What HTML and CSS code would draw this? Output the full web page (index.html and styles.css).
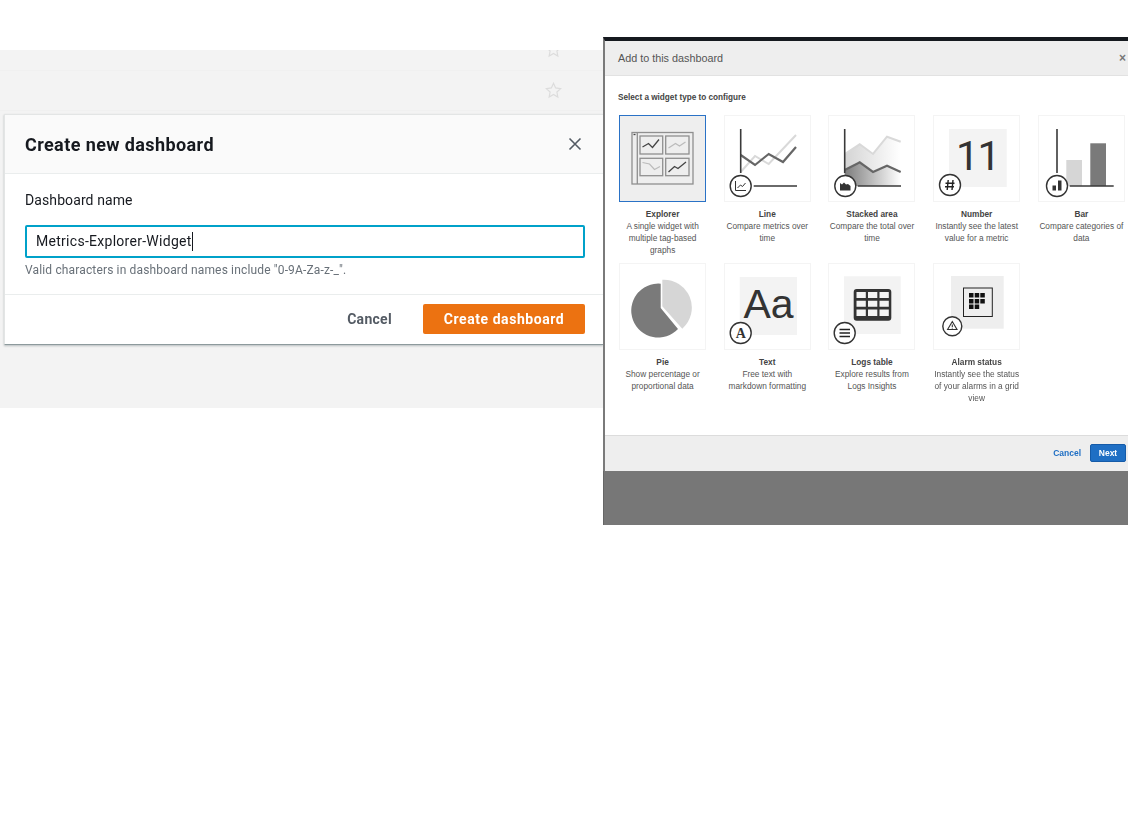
FILE: index.html
```html
<!DOCTYPE html>
<html lang="en">
<head>
<meta charset="utf-8">
<title>Create new dashboard</title>
<link rel="stylesheet" href="styles.css">
</head>
<body>
<main class="collage">
  <section class="shot-left">
    <div class="bg-row bg-row-clip">
      <svg class="star star-clip" viewBox="0 0 16 16"><path d="M8 1.2l2 4.4 4.7.6-3.5 3.2.9 4.8L8 11.8l-4.1 2.4.9-4.8L1.3 6.2 6 5.6z"/></svg>
    </div>
    <div class="bg-row">
      <svg class="star" viewBox="0 0 16 16"><path d="M8 1.2l2 4.4 4.7.6-3.5 3.2.9 4.8L8 11.8l-4.1 2.4.9-4.8L1.3 6.2 6 5.6z"/></svg>
    </div>
    <div class="dialog">
      <header class="dialog-head">
        <h2 class="dialog-title">Create new dashboard</h2>
        <svg class="dialog-close" viewBox="0 0 14 14"><path d="M1.5 1.5l11 11M12.5 1.5l-11 11"/></svg>
      </header>
      <div class="dialog-body">
        <div class="field-label">Dashboard name</div>
        <div class="field-input"><span class="field-value">Metrics-Explorer-Widget</span></div>
        <div class="field-hint">Valid characters in dashboard names include "0-9A-Za-z-_".</div>
      </div>
      <footer class="dialog-foot">
        <span class="btn-link">Cancel</span>
        <span class="btn-primary">Create dashboard</span>
      </footer>
    </div>
  </section>

  <section class="shot-right">
    <div class="modal">
      <header class="modal-head">
        <span class="modal-title">Add to this dashboard</span>
        <span class="modal-close">×</span>
      </header>
      <div class="modal-body">
        <div class="modal-sub">Select a widget type to configure</div>
        <div class="widget-grid">

          <div class="widget">
            <div class="tile tile-selected">
              <svg viewBox="0 0 87 87">
                <rect class="s-mid" x="13" y="17.5" width="61" height="51.5"/>
                <path class="s-mid" d="M18.3 17.5V69"/>
                <path class="s-dark" d="M14.5 19.5h2"/>
                <rect class="s-mid" x="21" y="21" width="22.7" height="18"/>
                <rect class="s-mid" x="46.7" y="21" width="23.3" height="18"/>
                <rect class="s-mid" x="21" y="43.3" width="22.7" height="17.4"/>
                <rect class="s-mid" x="46.7" y="43.3" width="23.3" height="17.4"/>
                <path class="s-dark" d="M23.5 32l6-3.5 4 4 6.5-8"/>
                <path class="s-light" d="M49.5 33l7-4.5 4 2.5 6-4"/>
                <path class="s-light" d="M23.5 47.5l7 1.5 5 5.5 5.5-3"/>
                <path class="s-dark" d="M49.5 57l6-5.5 3.500 2 8-6.500"/>
              </svg>
            </div>
            <div class="widget-name">Explorer</div>
            <div class="widget-desc">A single widget with multiple tag-based graphs</div>
          </div>

          <div class="widget">
            <div class="tile">
              <svg viewBox="0 0 87 87">
                <path class="l-light" d="M16.700 57L31 41l13.700 8L72 20"/>
                <path class="l-mid" d="M16.700 40L31 50l13.700-11L59 47l13-15"/>
                <path class="l-axis" d="M16.700 14v44M29.700 71H73"/>
                <circle class="badge" cx="16.700" cy="71" r="10.500"/>
                <path class="glyph" d="M11.500 66v9.500H22"/>
                <path class="glyph" d="M13.500 73l3-3 2 1.500 3-3.500"/>
              </svg>
            </div>
            <div class="widget-name">Line</div>
            <div class="widget-desc">Compare metrics over time</div>
          </div>

          <div class="widget">
            <div class="tile">
              <svg viewBox="0 0 87 87">
                <defs>
                  <linearGradient id="stack-light"><stop offset="0" stop-color="#d4d4d4"/><stop offset="1" stop-color="#fff"/></linearGradient>
                  <linearGradient id="stack-dark"><stop offset="0" stop-color="#7d7d7d"/><stop offset="1" stop-color="#fff"/></linearGradient>
                </defs>
                <path fill="url(#stack-light)" d="M16.700 39l15-9.700L45 39l14-17.300 13.700 5V71H16.700z"/>
                <path fill="url(#stack-dark)" d="M16.700 55l15-7.700L45 57l14-6.300L72.700 57V71H16.700z"/>
                <path class="l-light" d="M16.700 39l15-9.700L45 39l14-17.300 13.700 5"/>
                <path class="l-mid" d="M16.700 55l15-7.700L45 57l14-6.300L72.700 57"/>
                <path class="l-axis" d="M16.700 14v44M29.700 71H73"/>
                <circle class="badge" cx="17.300" cy="71" r="10.500"/>
                <path class="glyph-fill" d="M12 75.500V68l2 1.500 2-2 2 2 2-.5 2.500 2v4.500z"/>
              </svg>
            </div>
            <div class="widget-name">Stacked area</div>
            <div class="widget-desc">Compare the total over time</div>
          </div>

          <div class="widget">
            <div class="tile">
              <svg viewBox="0 0 87 87">
                <rect class="panel" x="16" y="14" width="57.700" height="58"/>
                <text class="tile-num" x="44.500" y="55">11</text>
                <circle class="badge" cx="17" cy="70" r="10.500"/>
                <path class="glyph-hash" d="M15.200 65l-1 10M20 65l-1 10M12.500 68.300h9M12 71.800h9"/>
              </svg>
            </div>
            <div class="widget-name">Number</div>
            <div class="widget-desc">Instantly see the latest value for a metric</div>
          </div>

          <div class="widget">
            <div class="tile">
              <svg viewBox="0 0 87 87">
                <rect x="28.300" y="45" width="15.700" height="26" fill="#d6d6d6"/>
                <rect x="52.300" y="28.300" width="15.700" height="42.700" fill="#7a7a7a"/>
                <path class="l-axis" d="M19 14v44M31.700 71h44"/>
                <circle class="badge" cx="19" cy="71" r="10.500"/>
                <rect class="glyph-fill" x="14.500" y="70.500" width="3.500" height="5"/>
                <rect class="glyph-fill" x="20" y="65.500" width="3.500" height="10"/>
              </svg>
            </div>
            <div class="widget-name">Bar</div>
            <div class="widget-desc">Compare categories of data</div>
          </div>

          <div class="widget">
            <div class="tile">
              <svg viewBox="0 0 87 87">
                <path fill="#7a7a7a" d="M41.700 45V20.700A27 27 0 1 0 59 66z"/>
                <path fill="#d6d6d6" d="M43.300 43.300V16.700A28 28 0 0 1 63.300 65.700z"/>
              </svg>
            </div>
            <div class="widget-name">Pie</div>
            <div class="widget-desc">Show percentage or proportional data</div>
          </div>

          <div class="widget">
            <div class="tile">
              <svg viewBox="0 0 87 87">
                <rect class="panel" x="15.700" y="14" width="57.300" height="58"/>
                <text class="tile-big" x="44.500" y="55">Aa</text>
                <circle class="badge" cx="16.700" cy="70" r="10.500"/>
                <text class="glyph-a" x="16.700" y="75">A</text>
              </svg>
            </div>
            <div class="widget-name">Text</div>
            <div class="widget-desc">Free text with markdown formatting</div>
          </div>

          <div class="widget">
            <div class="tile">
              <svg viewBox="0 0 87 87">
                <rect class="panel" x="16" y="13.300" width="56.700" height="57.700"/>
                <rect x="25.700" y="26" width="37.600" height="31.700" rx="3" fill="#333"/>
                <path class="table-cells" d="M28.500 29h9.300v6h-9.300zM40 29h9.300v6H40zM51.500 29h9.300v6h-9.300zM28.500 37.800h9.300v6h-9.300zM40 37.800h9.300v6H40zM51.500 37.800h9.300v6h-9.300zM28.500 46.600h9.300v6.500h-9.300zM40 46.600h9.300v6.500H40zM51.500 46.600h9.300v6.500h-9.300z"/>
                <circle class="badge" cx="16.700" cy="70" r="10.500"/>
                <path class="glyph-lines" d="M11.500 66.500h10.500M11.500 70h10.500M11.500 73.500h10.500"/>
              </svg>
            </div>
            <div class="widget-name">Logs table</div>
            <div class="widget-desc">Explore results from Logs Insights</div>
          </div>

          <div class="widget">
            <div class="tile">
              <svg viewBox="0 0 87 87">
                <rect class="panel panel-alarm" x="18" y="13" width="52.700" height="52.700"/>
                <rect x="30.500" y="25" width="28.800" height="28.500" fill="none" stroke="#222" stroke-width="1"/>
                <path class="glyph-fill-black" d="M36 30h4.500v4.500H36zM41.700 30h4.500v4.500h-4.500zM47.300 30h4.500v4.500h-4.500zM36 36h4.500v4.500H36zM41.700 36h4.500v4.500h-4.500zM47.300 36h4.500v4.500h-4.500zM36 41.500h4.500V46H36zM41.700 41.500h4.500V46h-4.500z"/>
                <circle class="badge" cx="19.300" cy="63.300" r="9.500"/>
                <path class="glyph-tri" d="M19.300 58.500l4.700 8h-9.400zM19.300 61.500v2.500M19.300 64.700v.8"/>
              </svg>
            </div>
            <div class="widget-name">Alarm status</div>
            <div class="widget-desc">Instantly see the status of your alarms in a grid view</div>
          </div>

        </div>
      </div>
      <footer class="modal-foot">
        <span class="modal-cancel">Cancel</span>
        <span class="modal-next">Next</span>
      </footer>
    </div>
    <div class="backdrop"></div>
  </section>
</main>
</body>
</html>
```

FILE: styles.css
```css
* { box-sizing: border-box; }
html, body { margin: 0; padding: 0; background: #fff; }
.collage { display: flex; align-items: flex-start; width: 1128px; height: 836px; overflow: hidden; }

/* Left screenshot */
.shot-left {
  width: 603px; height: 358px; margin-top: 50px; flex: none;
  background: #f3f3f3; overflow: hidden;
  font-family: Roboto, "Liberation Sans", sans-serif;
  filter: blur(.3px);
}
.bg-row { height: 40px; border-bottom: 1px solid #f0f0f0; display: flex; justify-content: flex-end; padding: 11px 41px 0 0; }
.bg-row-clip { height: 21px; padding-top: 0; overflow: hidden; }
.star { width: 17px; height: 17px; fill: none; stroke: #dcdcdc; stroke-width: 1.100; flex: none; }
.star-clip { margin-top: -9px; }

.dialog {
  margin: 3px 0 0 4px; height: 231px; background: #fff;
  border: 1px solid #e3e5e5; border-right: 0; border-bottom: 1px solid #8d9a9c;
  box-shadow: 0 1px 2px rgba(0, 28, 36, .25);
  display: flex; flex-direction: column;
}
.dialog-head {
  height: 59px; flex: none; background: #fafafa; border-bottom: 1px solid #eaeded;
  display: flex; align-items: center; justify-content: space-between; padding: 0 21px 0 20px;
}
.dialog-title { margin: 0; font-size: 18px; font-weight: 700; color: #16191f; letter-spacing: .4px; }
.dialog-close { width: 14px; height: 14px; fill: none; stroke: #545b64; stroke-width: 1.600; }
.dialog-body { flex: 1; padding: 17px 18px 0 20px; border-bottom: 1px solid #eaeded; }
.field-label { font-size: 14px; line-height: 19px; color: #16191f; letter-spacing: .1px; }
.field-input {
  margin-top: 15px; height: 33px; border: 2px solid #00a1c9; border-radius: 2px; background: #fff;
  display: flex; align-items: center; padding-left: 9px;
}
.field-value { font-size: 14px; color: #16191f; border-right: 1px solid #16191f; line-height: 19px; letter-spacing: .28px; }
.field-hint { margin-top: 4px; font-size: 12px; line-height: 16px; color: #687078; letter-spacing: .15px; }
.dialog-foot { height: 49px; flex: none; display: flex; align-items: center; justify-content: flex-end; padding: 0 18px 2px 0; gap: 31px; }
.btn-link { font-size: 14px; font-weight: 700; color: #545b64; letter-spacing: .3px; }
.btn-primary {
  width: 162px; height: 30px; background: #ec7211; color: #fff; border-radius: 2px;
  font-size: 14px; font-weight: 700; letter-spacing: .55px;
  display: flex; align-items: center; justify-content: center;
}

/* Right screenshot */
.shot-right {
  width: 525px; height: 488px; margin-top: 37px; flex: none;
  display: flex; flex-direction: column;
  font-family: "Liberation Sans", Arial, sans-serif;
  filter: blur(.45px);
}
.modal {
  height: 434px; flex: none; background: #fff; display: flex; flex-direction: column;
  border-top: 4px solid #15191f; border-left: 2px solid #7a7a7a;
}
.modal-head {
  height: 35px; flex: none; background: #eee; border-bottom: 1px solid #e2e2e2;
  display: flex; align-items: center; justify-content: space-between; padding: 0 2px 0 13px;
}
.modal-title { font-size: 10.800px; color: #555; }
.modal-close { font-size: 12px; font-weight: 700; color: #777; line-height: 1; }
.modal-body { flex: 1; padding: 16px 0 0 14px; }
.modal-sub { font-size: 8.200px; line-height: 12px; font-weight: 700; color: #444; margin-left: -1px; }
.widget-grid {
  margin-top: 11px;
  display: grid; grid-template-columns: repeat(5, 87.200px); column-gap: 17.500px;
  grid-template-rows: 148px 172px;
}
.widget { text-align: center; min-width: 0; }
.tile { width: 87px; height: 87px; border: 1px solid #f4f4f4; }
.tile svg { display: block; width: 87px; height: 87px; margin: -1px; }
.tile-selected { background: #eee; border-color: #2a72c6; }
.widget-name { margin-top: 6px; font-size: 8.300px; line-height: 12px; font-weight: 700; color: #444; }
.widget-desc { font-size: 8.300px; line-height: 12px; color: #555; margin: 0 -1px; }

.s-mid { fill: none; stroke: #8f8f8f; stroke-width: 1.300; }
.s-dark { fill: none; stroke: #444; stroke-width: 1.300; }
.s-light { fill: none; stroke: #bbb; stroke-width: 1.200; }
.l-light { fill: none; stroke: #d9d9d9; stroke-width: 2; }
.l-mid { fill: none; stroke: #666; stroke-width: 2.200; }
.l-axis { fill: none; stroke: #3a3a3a; stroke-width: 1.600; }
.badge { fill: #fff; stroke: #333; stroke-width: 1.400; }
.glyph { fill: none; stroke: #333; stroke-width: 1; }
.glyph-fill { fill: #333; }
.glyph-fill-black { fill: #111; }
.glyph-hash { fill: none; stroke: #222; stroke-width: 1.400; }
.glyph-lines { fill: none; stroke: #222; stroke-width: 1.300; }
.glyph-tri { fill: none; stroke: #333; stroke-width: 1.100; }
.glyph-a { font-family: "Liberation Serif", serif; font-weight: 700; font-size: 14px; fill: #333; text-anchor: middle; }
.panel { fill: #f3f3f3; }
.panel-alarm { fill: #eee; }
.tile-big { font-family: "Liberation Sans", Arial, sans-serif; font-size: 41px; fill: #333; text-anchor: middle; }
.tile-num { font-family: Roboto, sans-serif; font-size: 41px; fill: #333; text-anchor: middle; letter-spacing: -1.500px; }
.table-cells { fill: #f3f3f3; }

.modal-foot {
  height: 37px; flex: none; background: #eee; border-top: 1px solid #dcdcdc; border-bottom: 1px solid #ccc;
  display: flex; align-items: center; justify-content: flex-end; padding: 0 2px 2px 0; gap: 9px;
}
.modal-cancel { font-size: 8.500px; font-weight: 700; color: #1f6fc4; }
.modal-next {
  width: 36px; height: 18px; background: #1f6fc4; border: 1px solid #155ba8; border-radius: 2px;
  color: #fff; font-size: 8.500px; font-weight: 700;
  display: flex; align-items: center; justify-content: center;
}
.backdrop { flex: 1; background: #777; border-left: 1px solid #666; }
```
